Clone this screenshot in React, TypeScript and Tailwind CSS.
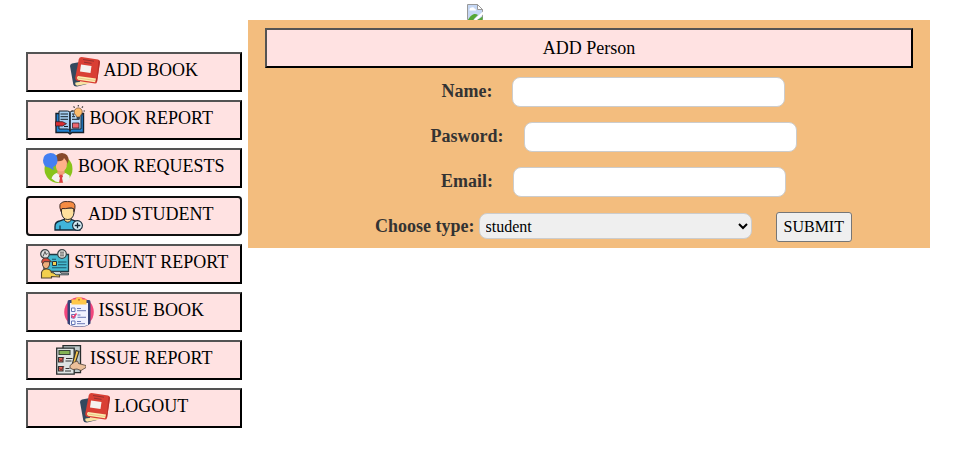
import type { ReactNode } from "react";

function Icon({ children }: { children: ReactNode }) {
  return (
    <svg className="inline-block size-[30px] align-middle" viewBox="0 0 30 30" fill="none" aria-hidden="true">
      {children}
    </svg>
  );
}

function BooksIcon() {
  return (
    <Icon>
      <path d="M2 6.500 10 5v20l7 2-10 2.500q-3 .5-3.700-2L0 9q0-2 2-2.500z" fill="#34495e" />
      <path d="M5.500 25.500 16 24l3 2.500L7 28.700q-2.500-1-1.500-3.200z" fill="#f9e3a4" />
      <path d="M11.500 0 28 2.500q2 .5 2 2.500l-3 20q-.5 1.700-2 1.500L8 24q-3-.5-2.700-3.500L8.800 2q.7-2 2.700-2z" fill="#d93f34" />
      <path d="m28.500 2.700 1.500 2-3 20.300-2-2 2-3z" fill="#b62f2a" />
      <path d="M8 19 26 21.500l-1 3.700-17-2.500q-2-1.700 0-3.700z" fill="#fdeaae" />
      <path d="M8 21 25.500 23.500" stroke="#d5b26c" strokeWidth=".6" />
      <path d="m11 7.500 10.500 1.500-1 7-10.500-1.500z" fill="#f5f1ee" />
      <path d="m13 2.500 11 1.700M14 5.200l7.500 1.200" stroke="#963130" strokeWidth="1" />
    </Icon>
  );
}

function OpenBookIcon() {
  return (
    <Icon>
      <path d="M1 8.500h27.500v19H17L15 29l-2-1.500H1z" fill="#2280d0" stroke="#17202b" strokeWidth="1.400" />
      <path d="M4 6h8.500q2.500 0 2.500 2v17.500q-1-1.500-3-1.500H4z" fill="#a4cdf0" stroke="#17202b" strokeWidth="1" />
      <path d="M26 6h-8.500Q15 6 15 8v17.500q1-1.500 3-1.500h8z" fill="#b8dafa" stroke="#17202b" strokeWidth="1" />
      <path d="M15 8v21" stroke="#17202b" strokeWidth="1.300" />
      <path d="M5.500 9h7.500M5.500 11.700h7.500M5.500 14.300h7.500M9 21.500h4M17 9h2.500M17 11.700h3M17 14.300h7.500" stroke="#17202b" strokeWidth="1" />
      <path d="M.5 16.700h7l4 2-4 2.300h-7z" fill="#d82d32" stroke="#341d24" strokeWidth=".8" />
      <path d="M17.500 18h6.500v5h-6.500z" fill="#ed6870" stroke="#32202b" strokeWidth=".8" />
      <path d="M21.500 12q-.2-1.500-1-2.200a4 4 0 1 1 5.500 0q-1 .9-1 2.200z" fill="#fdbc6c" stroke="#6e4a35" strokeWidth=".7" />
      <path d="M21.700 13h3.200" stroke="#293541" strokeWidth="1.700" />
      <path d="M23.300 0v1.500M18.500 1.500l1.200 1.200M28 1.500l-1.200 1.200M16.500 6H18M30 6h-1.500M28.700 10.500l-1.200-1M18 10.500l1-1" stroke="#333" strokeWidth="1.100" />
    </Icon>
  );
}

function RequestIcon() {
  return (
    <Icon>
      <circle cx="15.500" cy="16" r="14" fill="#88c31a" />
      <path d="M12 6q1-6 7-6 7 .5 6.500 8L23 13H13z" fill="#87492b" />
      <path d="M14.500 14h7v8h-7z" fill="#eca079" />
      <path d="M13 8q7 1 8-3 3 3 3 5 0 8.500-6 8.500T13 11z" fill="#ffb18a" />
      <path d="m13.500 20 4.500 2 4.500-2 4 2.500q1 4-3 6-5 2-11 0l-4-3q1-4 5-5.500z" fill="#f4f2ef" />
      <path d="M14 19.500h8L18 24z" fill="#f1a27b" />
      <path d="M16.700 21.700h2.600l.7 2-1 1 1 5h-4l1-5-1-1z" fill="#dd3e42" />
      <path d="M7.500 0q7 .2 7 7.200 0 5-4.500 7l1 3-4.500-2.500Q0 14 0 7.500 .2.500 7.500 0z" fill="#447ff1" />
    </Icon>
  );
}

function AddStudentIcon() {
  return (
    <Icon>
      <path d="M1 29v-3.500q0-4.500 4.500-5.500L10 18.500h7l4.500 1.500q4.500 1 4.500 5.500V29z" fill="#40b5da" stroke="#142837" strokeWidth="1.300" />
      <path d="M10.500 16.500h6.500v3q-3.200 3.500-6.500 0z" fill="#ffd88a" stroke="#26292f" strokeWidth="1" />
      <path d="M7.500 7h12.500v5q-1 6.500-6.200 6.500T7.500 12z" fill="#ffdf9d" stroke="#26292f" strokeWidth="1" />
      <path d="M7 10.500Q5.300 6 6 3.500 8 0 13.500.6q7-.5 7.500 4 .2 3-1 6V8q-2-1.700-5-1-4 1-7 .5z" fill="#f68b43" stroke="#3f2a27" strokeWidth="1" />
      <path d="M6 24.500V29" stroke="#142837" strokeWidth="1.100" />
      <circle cx="23.500" cy="24.500" r="4.900" fill="#d9eef6" stroke="#142837" strokeWidth="1.100" />
      <path d="M23.500 21.700v5.600M20.700 24.500h5.600" stroke="#142837" strokeWidth="1.300" />
    </Icon>
  );
}

function StudentReportIcon() {
  return (
    <Icon>
      <path d="M4 5.500h24.500v17H4z" fill="#45b9cf" stroke="#203942" strokeWidth="1.300" />
      <path d="M12.500 12.500h4v4h-4z" fill="#f5cf50" stroke="#26343a" strokeWidth="1" />
      <path d="M18 13h8.500M18 15.700h8.500M12 18.800h14.500M12 10.300h4" stroke="#1d566b" strokeWidth="1.100" />
      <circle cx="5" cy="5" r="4.300" fill="#dedede" stroke="#3c4347" strokeWidth="1.200" />
      <path d="m3 7.500 2-5 1 3 1.500-1" stroke="#555" strokeWidth="1" />
      <circle cx="22" cy="5" r="4.300" fill="#e3e3df" stroke="#3c4347" strokeWidth="1.200" />
      <path d="M20 3.200h4M20 5h4M20 6.800h4" stroke="#555" strokeWidth=".9" />
      <path d="M2.500 12h7v4q-1 3.700-3.500 3.700T2.500 16z" fill="#efb07d" stroke="#463936" strokeWidth=".9" />
      <path d="M1.700 13.500Q1.700 9 6 9q3.500.5 4 2.700l1.500 1H4l-1 2z" fill="#d94b3b" stroke="#463936" strokeWidth=".9" />
      <path d="M1.500 29v-5.500q1-3.500 5-3.500t5 3.500l8 1.500v3l-8-.5V29z" fill="#f3cf4d" stroke="#564732" strokeWidth="1.100" />
      <path d="M12 22.500h8l1 1.700h7.500v1.600H16z" fill="#c9d5d8" stroke="#35454b" strokeWidth="1" />
    </Icon>
  );
}

function ClipboardIcon() {
  return (
    <Icon>
      <circle cx="15" cy="15" r="14.800" fill="#f2457c" />
      <path d="M5 3h20q1.500 0 1.500 2v21.500Q22.500 30 15 30T3.500 26.500V5Q3.500 3 5 3z" fill="#364276" />
      <path d="M6 6h18v22q-8 3-18 0z" fill="#f1f2ff" />
      <path d="M7.500 2.500h4Q12 0 15 0t3.500 2.500h4v5h-15z" fill="#ffc84b" />
      <circle cx="15" cy="2.700" r="1" fill="#c77b2d" />
      <path d="M7.500 11H11v3.500H7.500zM7.500 17.500H11V21H7.500zM7.500 24H11v3.500H7.500z" fill="#fff" stroke="#6576b7" strokeWidth="1" />
      <path d="m7.500 18.500 2 2 3-4" stroke="#ef3f76" strokeWidth="1.500" />
      <path d="M13 11.500h4M13 13.700h9M13.500 18h3M13.500 20.300h8.500M13 24.500h4M13 26.700h8" stroke="#6c79b5" strokeWidth="1" />
    </Icon>
  );
}

function IssueReportIcon() {
  return (
    <Icon>
      <path d="M7 .7h17.500v27H7z" fill="#bfc9ca" stroke="#272c2d" strokeWidth="1.300" />
      <path d="M.7 3.200h17.500v26H.7z" fill="#dde2e2" stroke="#272c2d" strokeWidth="1.300" />
      <path d="M3 5.500h11V9.500H3z" fill="#83b354" stroke="#394537" strokeWidth="1.100" />
      <path d="M2.500 12.500H7V17H2.500zM2.500 21.500H7V26H2.500z" fill="#eb6758" stroke="#333" strokeWidth="1.100" />
      <path d="m3.500 14 1.500 2 3-4M3.500 23l1.500 2 3-4" stroke="#7f3130" strokeWidth="1" />
      <path d="M10 13.500h6.500M9.500 16h6M9.500 23.500h4M9 26h6" stroke="#333" strokeWidth="1.100" />
      <path d="m20 5.500 3 1-4.500 14-2.500 2 .3-3.500z" fill="#f7c74b" stroke="#373430" strokeWidth="1.200" />
      <path d="m14 20.500 4.500-3.500 3-1 1 2.500 7.500 2v2L25 25.500l-4-1.500-4 .5-3-1.500z" fill="#ecc09b" stroke="#4b3d36" strokeWidth=".8" />
    </Icon>
  );
}

function MissingImage() {
  return (
    <svg className="size-4" viewBox="0 0 16 16" role="img" aria-label="Missing image">
      <path d="M.5.500h10l5 5v10H.5z" fill="#c5d7f4" stroke="#999" />
      <path d="M2.500 5.500q0-2 2-2 2-1 3 1 1.500 0 1.500 2H2.500z" fill="#fff" />
      <path d="M1 16q2-4.500 6-6 2-.5 4 1l-5 5z" fill="#54a735" />
      <path d="m10.500 16 5-3.500V16z" fill="#54a735" />
      <path d="M6.500 16 16 7.500v3L10 16z" fill="#fff" />
      <path d="M10.500.500v5h5z" fill="#fff" stroke="#999" />
    </svg>
  );
}

const menu = [
  { label: "ADD BOOK", icon: <BooksIcon /> },
  { label: "BOOK REPORT", icon: <OpenBookIcon /> },
  { label: "BOOK REQUESTS", icon: <RequestIcon /> },
  { label: "ADD STUDENT", icon: <AddStudentIcon />, active: true },
  { label: "STUDENT REPORT", icon: <StudentReportIcon /> },
  { label: "ISSUE BOOK", icon: <ClipboardIcon /> },
  { label: "ISSUE REPORT", icon: <IssueReportIcon /> },
  { label: "LOGOUT", icon: <BooksIcon /> },
];

const fields = [
  { id: "name", label: "Name:", type: "text" },
  { id: "password", label: "Pasword:", type: "password" },
  { id: "email", label: "Email:", type: "email" },
];

export default function App() {
  return (
    <div className="bg-white font-['Liberation_Serif','Times_New_Roman',serif] text-black">
      <header className="flex justify-center pt-1 pr-[29px]">
        <MissingImage />
      </header>
      <div className="flex items-start gap-1.5 pr-[49px] pl-[26px]">
        <nav className="flex w-[216px] shrink-0 flex-col gap-2 pt-8">
          {menu.map((item) => (
            <button
              key={item.label}
              type="button"
              className={
                item.active
                  ? "h-10 rounded-sm border-2 border-solid border-[#101010] bg-[#ffe2e2] text-lg leading-5 whitespace-nowrap"
                  : "h-10 border-2 border-black bg-[#ffe2e2] text-lg leading-5 whitespace-nowrap [border-style:outset]"
              }
            >
              {item.icon} {item.label}
            </button>
          ))}
        </nav>
        <main className="min-w-0 flex-1 bg-[#f3bd7e] px-[17px] pt-2 pb-1.5">
          <button type="button" className="h-10 w-full border-2 border-black bg-[#ffe2e2] text-lg leading-5 [border-style:outset]">
            ADD Person
          </button>
          <form className="flex flex-col gap-[15px] pt-[9px] pl-[49px]" onSubmit={(e) => e.preventDefault()}>
            {fields.map((field) => (
              <div key={field.id} className="flex items-center justify-center gap-5">
                <label htmlFor={field.id} className="pb-0.5 text-lg leading-5 font-bold text-[#333]">
                  {field.label}
                </label>
                <input
                  id={field.id}
                  type={field.type}
                  className="h-[30px] w-[273px] rounded-lg border border-[#ccc] bg-white px-1 text-base"
                />
              </div>
            ))}
            <div className="flex items-center justify-center">
              <label htmlFor="type" className="mr-1 pb-0.5 text-lg leading-5 font-bold text-[#333]">
                Choose type:
              </label>
              <select id="type" className="mb-0.5 h-[26px] w-[273px] rounded-lg border border-[#ccc] bg-[#efefef] px-0.5 text-base leading-5">
                <option>student</option>
                <option>teacher</option>
              </select>
              <button type="submit" className="ml-6 h-[30px] rounded-[3px] border border-[#767676] bg-[#efefef] px-[7px] text-base leading-5">
                SUBMIT
              </button>
            </div>
          </form>
        </main>
      </div>
    </div>
  );
}
